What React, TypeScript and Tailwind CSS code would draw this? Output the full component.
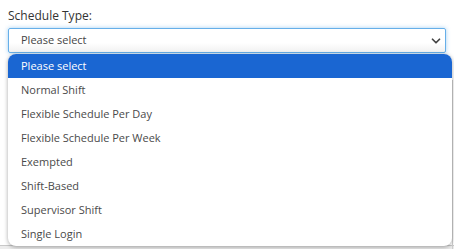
import { ChevronDown } from "lucide-react";

const options = [
  "Please select",
  "Normal Shift",
  "Flexible Schedule Per Day",
  "Flexible Schedule Per Week",
  "Exempted",
  "Shift-Based",
  "Supervisor Shift",
  "Single Login",
];

export default function App() {
  return (
    <div className="relative h-[249px] w-[454px] overflow-hidden bg-white font-['Open_Sans',sans-serif]">
      {/* Table behind the open list */}
      <div className="absolute left-0 right-0 top-[245px] h-[4px] border-t border-[#c8c8c8] bg-[#ececec]" />
      <div className="absolute right-[1px] top-[80px] h-[170px] w-[1px] bg-[#cfcfcf]" />

      <div className="relative px-2 pt-[7px]">
        <label className="block text-[12px] leading-[18px] text-[#333]">Schedule Type:</label>
        <div className="mt-[3px] flex h-[25px] items-center justify-between rounded-[2px] border border-[#66afe9] bg-gradient-to-b from-white from-60% to-[#f1f1f1] pl-[12px] pr-[2px] shadow-[0_0_4px_rgba(102,175,233,0.6)]">
          <span className="text-[11px] text-[#444]">Please select</span>
          <ChevronDown size={14} strokeWidth={3} className="text-[#444]" />
        </div>
      </div>

      {/* Open list */}
      <div className="absolute left-[8px] top-[54px] w-[444px] overflow-hidden rounded-[8px] bg-white shadow-[0_1px_4px_rgba(0,0,0,0.35)]">
        {options.map((o, i) => (
          <div
            key={o}
            className={`flex h-[24px] items-center pl-[13px] text-[11px] ${
              i === 0 ? "bg-[#1a66d2] text-white" : "text-[#4a4a4a]"
            }`}
          >
            {o}
          </div>
        ))}
      </div>
    </div>
  );
}
